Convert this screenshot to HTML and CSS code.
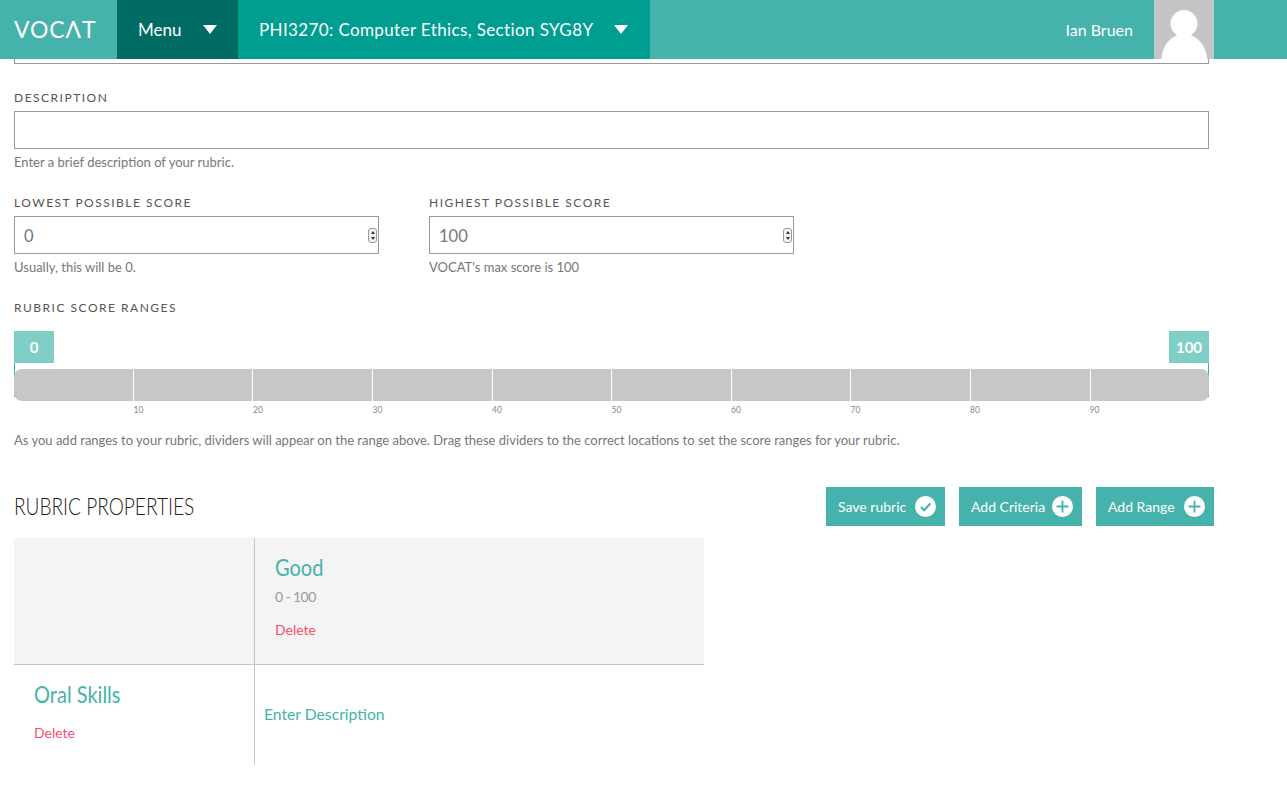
FILE: index.html
```html
<!DOCTYPE html>
<html lang="en">
<head>
    <meta charset="UTF-8">
    <meta name="viewport" content="width=device-width, initial-scale=1.0">
    <title>VOCAT - Rubric</title>
    <link rel="stylesheet" href="styles.css">
</head>
<body>
    <header class="topbar">
        <a class="logo">VOCΛT</a>
        <a class="nav-menu">Menu <span class="caret"></span></a>
        <a class="nav-course"><span class="course-name">PHI3270: Computer Ethics, Section SYG8Y</span> <span class="caret"></span></a>
        <div class="user">
            <span class="user-name">Ian Bruen</span>
            <svg class="avatar" viewBox="0 0 60 59">
                <rect width="60" height="59" fill="#c4c4c4"/>
                <circle cx="30" cy="23.5" r="13.5" fill="#fff"/>
                <path d="M7.5 59C8 45 18 34 30 34s22.500 11 23 25z" fill="#fff"/>
            </svg>
        </div>
    </header>

    <main class="page">
        <div class="cut-input"></div>

        <label class="field-label first">Description</label>
        <input class="text-input" type="text">
        <p class="help">Enter a brief description of your rubric.</p>

        <div class="score-row">
            <div class="score-field">
                <label class="field-label">Lowest possible score</label>
                <div class="number-wrap">
                    <input class="text-input" type="text" value="0">
                    <span class="spinner"></span>
                </div>
                <p class="help">Usually, this will be 0.</p>
            </div>
            <div class="score-field">
                <label class="field-label">Highest possible score</label>
                <div class="number-wrap">
                    <input class="text-input" type="text" value="100">
                    <span class="spinner"></span>
                </div>
                <p class="help">VOCAT's max score is 100</p>
            </div>
        </div>

        <label class="field-label ranges-label">Rubric score ranges</label>
        <div class="range">
            <div class="range-handles">
                <span class="handle">0</span>
                <span class="handle">100</span>
            </div>
            <div class="range-track">
                <div class="range-bar">
                    <span></span><span></span><span></span><span></span><span></span>
                    <span></span><span></span><span></span><span></span><span></span>
                </div>
            </div>
            <div class="range-ticks">
                <span></span><span>10</span><span>20</span><span>30</span><span>40</span>
                <span>50</span><span>60</span><span>70</span><span>80</span><span>90</span>
            </div>
        </div>
        <p class="help range-help">As you add ranges to your rubric, dividers will appear on the range above. Drag these dividers to the correct locations to set the score ranges for your rubric.</p>

        <div class="props-head">
            <h2>Rubric properties</h2>
            <div class="props-actions">
                <a class="btn save">Save rubric
                    <svg class="btn-icon" viewBox="0 0 21 21"><circle cx="10.500" cy="10.500" r="10.500" fill="#fff"/><path d="M6 11l3.200 3.200L15.300 7.500" fill="none" stroke="#45b3ab" stroke-width="2.200"/></svg>
                </a>
                <a class="btn criteria">Add Criteria
                    <svg class="btn-icon" viewBox="0 0 21 21"><circle cx="10.500" cy="10.500" r="10.500" fill="#fff"/><path d="M10.500 4.500v12M4.500 10.500h12" fill="none" stroke="#45b3ab" stroke-width="1.800"/></svg>
                </a>
                <a class="btn range-btn">Add Range
                    <svg class="btn-icon" viewBox="0 0 21 21"><circle cx="10.500" cy="10.500" r="10.500" fill="#fff"/><path d="M10.500 4.500v12M4.500 10.500h12" fill="none" stroke="#45b3ab" stroke-width="1.800"/></svg>
                </a>
            </div>
        </div>

        <div class="rubric-table">
            <div class="cell head-cell"></div>
            <div class="cell head-cell range-cell">
                <h3>Good</h3>
                <div class="range-values">0 - 100</div>
                <a class="delete">Delete</a>
            </div>
            <div class="cell criteria-cell">
                <h3>Oral Skills</h3>
                <a class="delete">Delete</a>
            </div>
            <div class="cell desc-cell">
                <a class="enter-desc">Enter Description</a>
            </div>
        </div>
    </main>
</body>
</html>
```

FILE: styles.css
```css
* {
    margin: 0;
    padding: 0;
    box-sizing: border-box;
}
body {
    font-family: 'Lato', 'Open Sans', sans-serif;
    background: #fff;
    color: #555;
    height: 797px;
    overflow: hidden;
}

/* Top bar */
.topbar {
    display: flex;
    align-items: stretch;
    height: 59px;
    background: #45b3ab;
    color: #fff;
    font-size: 17px;
}
.logo {
    width: 117px;
    padding-left: 14px;
    font-size: 23px;
    line-height: 58px;
    letter-spacing: 0.9px;
}
.nav-menu, .nav-course {
    display: flex;
    align-items: center;
    padding-bottom: 1px;
}
.nav-menu {
    width: 121px;
    padding-left: 21px;
    background: #006b62;
}
.nav-course {
    width: 412px;
    padding-left: 21px;
    background: #009e90;
}
.course-name {
    letter-spacing: 0.38px;
}
.caret {
    width: 0;
    height: 0;
    border-left: 7.5px solid transparent;
    border-right: 7.5px solid transparent;
    border-top: 9px solid #fff;
    margin-left: 21px;
}
.nav-menu .caret {
    margin-left: 22px;
}
.user {
    display: flex;
    align-items: center;
    margin-left: auto;
    margin-right: 73px;
}
.user-name {
    font-size: 16px;
    margin-right: 21px;
}
.avatar {
    display: block;
    width: 60px;
    height: 59px;
}

/* Form */
.page {
    width: 1209px;
    padding-left: 14px;
}
.cut-input {
    height: 5px;
    border: 1px solid #999;
    border-top: none;
}
.field-label {
    display: block;
    font-size: 12px;
    line-height: 14px;
    letter-spacing: 1.5px;
    text-transform: uppercase;
    color: #555;
    margin-top: 27px;
    margin-bottom: 6px;
}
.text-input {
    display: block;
    width: 100%;
    height: 38px;
    border: 1px solid #999;
    padding: 1px 9px 0;
    font: 16.5px 'Lato', sans-serif;
    color: #777;
    outline: none;
}
.help {
    font-size: 13px;
    line-height: 14px;
    color: #777;
    margin-top: 6px;
}
.score-row {
    display: flex;
    gap: 50px;
}
.score-field {
    width: 365px;
}
.number-wrap {
    position: relative;
}
.spinner {
    position: absolute;
    right: 2px;
    top: 12px;
    width: 9px;
    height: 15px;
    border: 1px solid #999;
    border-radius: 3px;
    background: #f2f2f2;
}
.spinner::before, .spinner::after {
    content: "";
    position: absolute;
    left: 1.500px;
    border-left: 2px solid transparent;
    border-right: 2px solid transparent;
}
.spinner::before {
    top: 2px;
    border-bottom: 3px solid #333;
}
.spinner::after {
    bottom: 2px;
    border-top: 3px solid #333;
}

/* Score range */
.ranges-label {
    margin-bottom: 16px;
}
.range-handles {
    display: flex;
    justify-content: space-between;
}
.handle {
    width: 40px;
    height: 32px;
    background: #7fcfc6;
    color: #fff;
    font-size: 15px;
    font-weight: 700;
    line-height: 32px;
    text-align: center;
}
.range-track {
    height: 34px;
    padding-top: 6px;
    border-left: 1px solid #45b3ab;
    border-right: 1px solid #45b3ab;
}
.range-bar {
    display: flex;
    height: 32px;
    margin: 0 -1px;
    padding-left: 0.3px;
    background: #c6c7c9;
    border-radius: 8px;
}
.range-bar span {
    flex: 1;
    border-left: 1px solid #fff;
}
.range-bar span:first-child {
    border-left: none;
}
.range-ticks {
    display: flex;
    margin-top: 8px;
    height: 11px;
    font-size: 8.5px;
    line-height: 11px;
    color: #888;
}
.range-ticks span {
    width: 119.5px;
}
.range-help {
    margin-top: 17px;
}

/* Rubric properties */
.props-head {
    display: flex;
    justify-content: space-between;
    align-items: center;
    width: 1200px;
    margin-top: 40px;
}
.props-head h2 {
    font-size: 23px;
    font-weight: 300;
    line-height: 37px;
    text-transform: uppercase;
    color: #222;
    transform: scaleX(0.83);
    transform-origin: left center;
}
.props-actions {
    display: flex;
    gap: 14px;
}
.btn {
    display: flex;
    align-items: center;
    justify-content: space-between;
    height: 39px;
    padding: 0 9px 1px 12px;
    background: #45b3ab;
    color: #fff;
    font-size: 14px;
}
.save { width: 119px; }
.criteria { width: 123px; }
.range-btn { width: 118px; }
.btn-icon {
    width: 21px;
    height: 21px;
}

.rubric-table {
    display: grid;
    grid-template-columns: 241px 449px;
    width: 690px;
    margin-top: 12px;
}
.cell:nth-child(odd) {
    border-right: 1px solid #c6c6c6;
}
.head-cell {
    height: 127px;
    background: #f4f4f4;
    border-bottom: 1px solid #c6c6c6;
}
.rubric-table h3 {
    font-size: 23px;
    font-weight: 400;
    line-height: 28px;
    color: #45b3ab;
    transform: scaleX(0.87);
    transform-origin: left center;
}
.range-cell {
    padding: 15px 20px 0;
}
.range-values {
    font-size: 14px;
    line-height: 18px;
    letter-spacing: -0.6px;
    color: #999;
    margin-top: 7px;
}
.delete {
    display: block;
    font-size: 14px;
    line-height: 18px;
    color: #f5506a;
    margin-top: 15px;
}
.criteria-cell {
    height: 100px;
    padding: 15px 20px 0;
}
.criteria-cell .delete {
    margin-top: 16px;
}
.desc-cell {
    display: flex;
    align-items: center;
    padding: 0 0 2px 9px;
}
.enter-desc {
    font-size: 15.7px;
    color: #45b3ab;
}
```
